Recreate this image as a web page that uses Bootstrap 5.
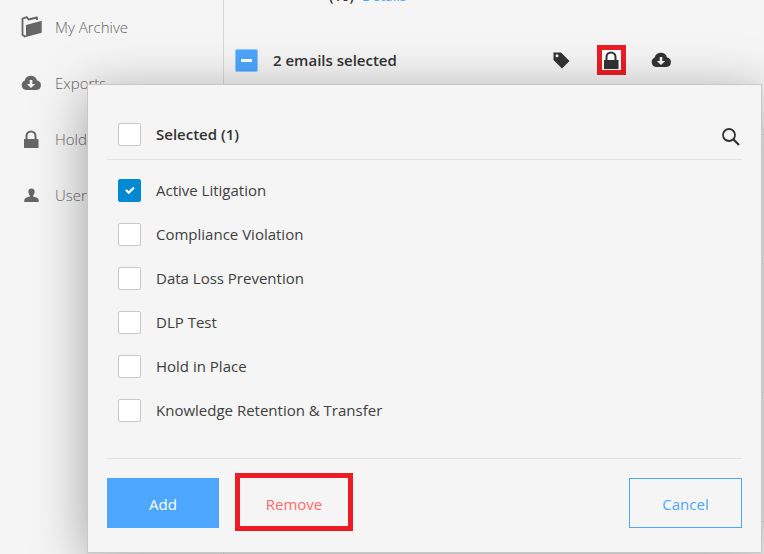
<!DOCTYPE html>
<html lang="en">
<head>
<meta charset="utf-8">
<meta name="viewport" content="width=device-width, initial-scale=1">
<title>Archive</title>
<link href="https://cdn.jsdelivr.net/npm/bootstrap@5.3.0/dist/css/bootstrap.min.css" rel="stylesheet">
<style>
body { background: #f5f5f5; color: #333; font-family: "Open Sans", sans-serif; font-size: 15px; line-height: 20px; }
.sidebar { width: 224px; margin-top: -1px; border-right: 1px solid #d8d8d8; }
.side-link { height: 56px; padding-left: 19px; gap: 12px; color: #666; font-weight: 300; text-decoration: none; }
.side-icon { width: 24px; height: 24px; }
.tool-icon { width: 24px; height: 24px; }
.summary { height: 32px; padding-left: 105px; margin-top: -20px; gap: 8px; font-size: 14px; }
.summary a { color: #4da6ff; text-decoration: none; }
.toolbar { height: 56px; margin-top: 20px; padding-left: 11px; }
.toolbar label { margin-left: 15px; }
.toolbar .tools { margin-left: 150px; gap: 21px; }
.tool-btn { width: 29px; height: 30px; color: #333; }
.marked { border: 5px solid #ed1c24; background: #fff; }
.mail-row { height: 129px; border-bottom: 1px solid #ddd; }
.mail-row:first-child { height: 47px; }
.tick { width: 23px; height: 23px; border: 1px solid #c8c8c8; background-color: #fff; flex: none; }
.form-check-input.tick { margin: 0; }
.form-check-input.tick:checked { background-color: #0088d1; border-color: #0088d1; background-size: 15px; }
.form-check-input.tick[type=checkbox] { border-radius: 2px; }
.form-check-input.select-all.tick:checked { background-color: #4da6ff; border-color: #8ec6ff; background-size: 21px; background-image: url("data:image/svg+xml,%3csvg xmlns='http://www.w3.org/2000/svg' viewBox='0 0 21 21'%3e%3cpath fill='%23fff' d='M5 9h11v3H5z'/%3e%3c/svg%3e"); }
.hold-panel { top: 84px; left: 87px; right: 2px; padding: 27px 19px 24px; background: #f5f5f5; border: 1px solid #c8c8c8; box-shadow: 0 10px 50px rgba(0,0,0,.35); }
.panel-head { height: 48px; padding-left: 11px; border-bottom: 1px solid #e3e3e3; }
.search-btn { margin-top: 11px; }
.hold-list { padding: 8px 11px 26px; border-bottom: 1px solid #e3e3e3; }
.hold-row { height: 44px; gap: 15px; }
.hold-list .hold-row { color: #404040; }
.panel-foot { padding-top: 19px; gap: 16px; }
.action { width: 112px; height: 50px; padding: 8px 12px 6px; border-radius: 0; font-size: 15px; }
.btn-add { background: #4da6ff; color: #fff; }
.btn-remove { width: 118px; height: 58px; margin: -5px 0 -3px; padding: 10px 12px 6px; border: 5px solid #ed1c24; color: #ff6b6b; }
.btn-cancel { width: 113px; border: 1px solid #4da6ff; color: #4da6ff; }
</style>
<script src="https://cdn.jsdelivr.net/npm/bootstrap@5.3.0/dist/js/bootstrap.bundle.min.js"></script>
</head>
<body>
<svg class="d-none" xmlns="http://www.w3.org/2000/svg">
  <symbol id="cloud" viewBox="0 0 24 24"><path fill="currentColor" fill-rule="evenodd" d="M7 19a5 5 0 0 1-1.300-9.500A6.400 6.400 0 0 1 18 9.500a4.800 4.800 0 0 1-.5 9.500zM10.700 9v4H7.800l4.200 4 4.200-4h-2.900V9z"/></symbol>
  <symbol id="lock" viewBox="0 0 24 24"><path fill="currentColor" fill-rule="evenodd" d="M5 12H6.500V9a5.500 5.500 0 0 1 11 0v3H19.500V21H5zM8.500 12h7V9a3.500 3.500 0 0 0-7 0z"/></symbol>
</svg>
<div class="d-flex vh-100 overflow-hidden position-relative">
  <nav class="sidebar flex-shrink-0">
    <a class="side-link d-flex align-items-center" href="#archive">
      <svg class="side-icon" viewBox="0 0 24 24" aria-hidden="true"><path d="M6 21.500 3.500 20V3.700L8 2.200l1.500 2.300 8.500-2V5" fill="none" stroke="currentColor" stroke-width="1.800" stroke-linejoin="round"/><path d="M7 10 22.700 5.800V17.800L5 22.500V20.500H7z" fill="currentColor"/></svg>
      My Archive</a>
    <a class="side-link d-flex align-items-center" href="#exports"><svg class="side-icon" aria-hidden="true"><use href="#cloud"/></svg>Exports</a>
    <a class="side-link d-flex align-items-center" href="#holds"><svg class="side-icon" aria-hidden="true"><use href="#lock"/></svg>Holds</a>
    <a class="side-link d-flex align-items-center" href="#users">
      <svg class="side-icon" viewBox="0 0 24 24" aria-hidden="true"><path fill="currentColor" d="M12.500 5.500c2.300 0 3.300 1.500 3.100 3.500-.1 1.600-.7 2.800-1.500 3.400v1l3.900 1.300c1.200.5 1.800 1.600 1.800 4.300H5.200c0-2.700.6-3.800 1.800-4.300l3.900-1.300v-1c-.8-.6-1.400-1.800-1.500-3.400-.2-2 .8-3.500 3.100-3.500z"/></svg>
      Users</a>
  </nav>
  <main class="flex-grow-1">
    <div class="summary d-flex align-items-center"><strong class="fw-semibold">(10)</strong><a href="#details">Details</a></div>
    <div class="toolbar d-flex align-items-center">
      <input class="form-check-input tick select-all" type="checkbox" id="emails" checked>
      <label class="fw-semibold" for="emails">2 emails selected</label>
      <div class="tools d-flex">
        <button class="btn tool-btn rounded-0 p-0 border-0 d-flex align-items-center justify-content-center" type="button" aria-label="Tag"><svg class="tool-icon" viewBox="0 0 24 24" aria-hidden="true"><path fill="currentColor" fill-rule="evenodd" d="M4.500 4.500H12L20.500 13 13 20.500 4.500 12zM8 6.300a1.500 1.500 0 1 0 0 3 1.500 1.500 0 0 0 0-3z"/></svg></button>
        <button class="btn tool-btn marked rounded-0 p-0 d-flex align-items-center justify-content-center" type="button" aria-label="Hold"><svg class="tool-icon flex-shrink-0" aria-hidden="true"><use href="#lock"/></svg></button>
        <button class="btn tool-btn rounded-0 p-0 border-0 d-flex align-items-center justify-content-center" type="button" aria-label="Export"><svg class="tool-icon" aria-hidden="true"><use href="#cloud"/></svg></button>
      </div>
    </div>
    <div>
      <div class="mail-row"></div>
      <div class="mail-row"></div>
      <div class="mail-row"></div>
      <div class="mail-row"></div>
    </div>
  </main>
  <section class="hold-panel position-absolute" aria-label="Holds">
    <div class="panel-head d-flex align-items-start justify-content-between">
      <div class="hold-row d-flex align-items-center"><input class="form-check-input tick" type="checkbox" id="all"><label class="fw-semibold" for="all">Selected (1)</label></div>
      <button class="btn p-0 border-0 search-btn" type="button" aria-label="Search"><svg class="tool-icon" viewBox="0 0 24 24" aria-hidden="true"><circle cx="11" cy="10" r="6" fill="none" stroke="#333" stroke-width="1.800"/><path d="M15.300 14.300 21 20" stroke="#333" stroke-width="2.200"/></svg></button>
    </div>
    <div class="hold-list">
      <div class="hold-row d-flex align-items-center"><input class="form-check-input tick" type="checkbox" id="h1" checked><label for="h1">Active Litigation</label></div>
      <div class="hold-row d-flex align-items-center"><input class="form-check-input tick" type="checkbox" id="h2"><label for="h2">Compliance Violation</label></div>
      <div class="hold-row d-flex align-items-center"><input class="form-check-input tick" type="checkbox" id="h3"><label for="h3">Data Loss Prevention</label></div>
      <div class="hold-row d-flex align-items-center"><input class="form-check-input tick" type="checkbox" id="h4"><label for="h4">DLP Test</label></div>
      <div class="hold-row d-flex align-items-center"><input class="form-check-input tick" type="checkbox" id="h5"><label for="h5">Hold in Place</label></div>
      <div class="hold-row d-flex align-items-center"><input class="form-check-input tick" type="checkbox" id="h6"><label for="h6">Knowledge Retention &amp; Transfer</label></div>
    </div>
    <div class="panel-foot d-flex">
      <button class="btn action btn-add" type="button">Add</button>
      <button class="btn action btn-remove" type="button">Remove</button>
      <button class="btn action btn-cancel ms-auto" type="button">Cancel</button>
    </div>
  </section>
</div>
</body>
</html>
